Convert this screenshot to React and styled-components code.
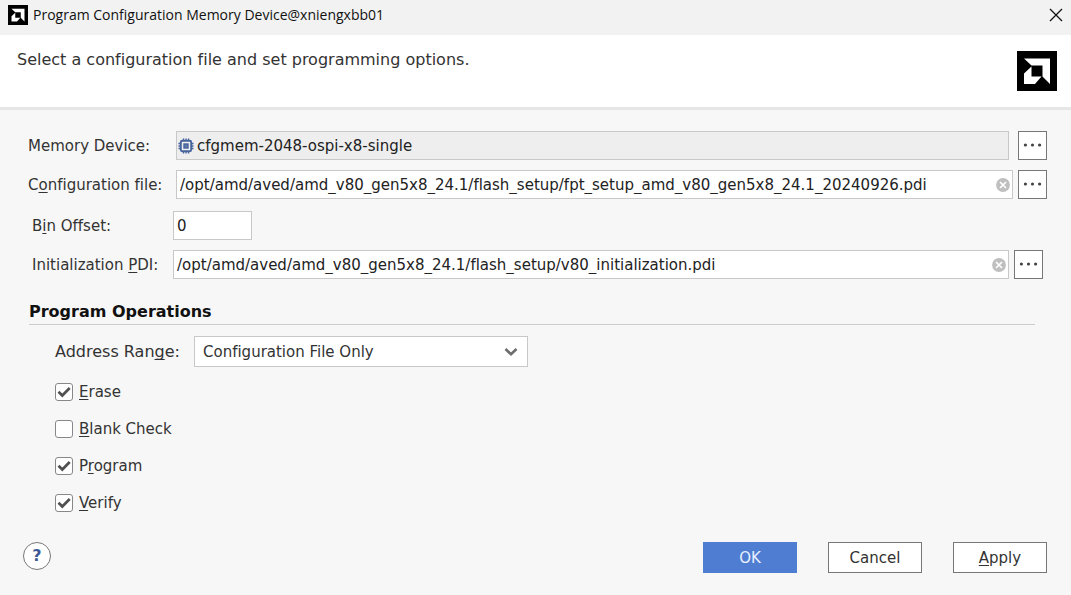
import React, { useState } from "react";
import styled, { createGlobalStyle } from "styled-components";

const GlobalStyle = createGlobalStyle`
  *, *::before, *::after { box-sizing: border-box; }
  html, body { margin: 0; background: #f7f7f7; }
  body, button, input, select {
    font-family: "DejaVu Sans", Verdana, sans-serif;
    font-size: 15px;
    font-variant-ligatures: none;
    color: #333;
  }
`;

const Dialog = styled.main`
  display: flex;
  flex-direction: column;
  min-height: 100vh;
  background: #f7f7f7;
`;

const TitleBar = styled.header`
  display: flex;
  align-items: center;
  gap: 5px;
  height: 35px;
  padding: 0 8px 5px;
  background: #f2f2f2;
`;

const WindowTitle = styled.h1`
  flex: 1;
  margin: 0;
  font: 400 14px/20px "Open Sans", "Segoe UI", sans-serif;
  color: #111;
`;

const CloseButton = styled.button`
  display: flex;
  padding: 0;
  border: 0;
  background: none;
`;

const Banner = styled.section`
  display: flex;
  justify-content: space-between;
  align-items: flex-start;
  height: 75px;
  padding: 16px 14px 0 17px;
  background: #fff;
  border-bottom: 3px solid #e6e6e6;
`;

const BannerText = styled.p`
  margin: 0;
  font-size: 16px;
  line-height: 18px;
`;

const Form = styled.form`
  display: flex;
  flex-direction: column;
  flex: 1;
`;

const FieldGroup = styled.div`
  display: flex;
  flex-direction: column;
  gap: 10px;
  padding: ${(p) => (p.$inset ? "12px 28px 0 32px" : "21px 24px 0 28px")};
`;

const FieldRow = styled.div`
  display: grid;
  grid-template-columns: ${(p) => (p.$inset ? 141 : 148)}px 1fr 29px;
  align-items: center;

  & > :nth-child(2) { margin-right: ${(p) => (p.$wideGap ? 9 : 5)}px; }
`;

const FieldLabel = styled.label`
  line-height: 18px;
  white-space: nowrap;
`;

const FieldBox = styled.div`
  display: flex;
  align-items: center;
  height: 29px;
  width: ${(p) => (p.$short ? "79px" : "auto")};
  padding: 0 2px 0 ${(p) => (p.$locked ? 1 : 3)}px;
  gap: 3px;
  border: 1px solid #c8c8c8;
  background: ${(p) => (p.$locked ? "#eee" : "#fff")};
`;

const TextInput = styled.input`
  flex: 1;
  min-width: 0;
  height: 100%;
  padding: 0;
  border: 0;
  outline: 0;
  background: transparent;
  color: #222;
`;

const ClearButton = styled.button`
  display: flex;
  padding: 0;
  border: 0;
  background: none;
`;

const BrowseButton = styled.button`
  display: grid;
  place-items: center;
  width: 29px;
  height: 29px;
  padding: 0;
  border: 1px solid #777;
  background: #fff;
`;

const Operations = styled.fieldset`
  min-width: 0;
  margin: 24px 36px 0 29px;
  padding: 0;
  border: 0;
`;

const OperationsTitle = styled.legend`
  width: 100%;
  padding: 0 0 3px;
  border-bottom: 1px solid #ccc;
  font-size: 16px;
  font-weight: 700;
  line-height: 18px;
  color: #111;
`;

const RangeRow = styled.div`
  display: flex;
  align-items: center;
  padding: 11px 0 5px 26px;

  & > label { width: 139px; font-size: 16px; }
`;

const SelectWrap = styled.div`
  display: grid;
  width: 334px;
  align-items: center;

  & > * { grid-area: 1 / 1; }
  & > svg { justify-self: end; margin-right: 10px; pointer-events: none; }
`;

const Select = styled.select`
  width: 100%;
  height: 31px;
  padding: 0 8px;
  border: 1px solid #c8c8c8;
  border-radius: 0;
  background: #fff;
  appearance: none;
`;

const CheckOptions = styled.div`
  display: grid;
  grid-auto-rows: 37px;
  padding: 1px 0 0 26px;
`;

const CheckRow = styled.label`
  display: flex;
  align-items: center;
  gap: 6px;
  width: fit-content;
`;

const CheckMark = styled.span`
  display: grid;

  & > * { grid-area: 1 / 1; }
  & > svg { pointer-events: none; }
`;

const CheckInput = styled.input`
  width: 18px;
  height: 18px;
  margin: 0;
  border: 1px solid #888;
  border-radius: 3px;
  background: #fff;
  appearance: none;
`;

const Footer = styled.footer`
  display: flex;
  align-items: flex-start;
  gap: 31px;
  margin-top: auto;
  padding: 0 24px 22px 23px;
`;

const HelpButton = styled.button`
  width: 28px;
  height: 28px;
  margin-right: auto;
  padding: 0;
  border: 1px solid #777;
  border-radius: 50%;
  background: #fff;
  color: #3d5a98;
  font-size: 16px;
  font-weight: 700;
  line-height: 20px;
`;

const ActionButton = styled.button`
  width: 94px;
  height: 31px;
  padding: 0;
  border: 1px solid ${(p) => (p.$primary ? "#4f7dd1" : "#777")};
  background: ${(p) => (p.$primary ? "#4f7dd1" : "#fff")};
  color: ${(p) => (p.$primary ? "#e8f0ff" : "#333")};
`;

const Mnemonic = styled.span`
  text-decoration: underline 1px;
  text-decoration-skip-ink: none;
  text-underline-offset: 2px;
`;

function Logo({ size }) {
  return (
    <svg width={size} height={size} viewBox="0 0 40 40" aria-hidden="true">
      <rect width="40" height="40" fill="#000" />
      <path d="M7 7.5H33V33L25.5 25.5V14.5H14.5Z" fill="#fff" />
      <path d="M14.5 15.5V25.5H24.5L18 33H7V22.5Z" fill="#fff" />
    </svg>
  );
}

function ChipIcon() {
  return (
    <svg width="16" height="16" viewBox="0 0 16 16" fill="none" stroke="#45639c" aria-hidden="true">
      <rect x="2.8" y="2.8" width="10.4" height="10.4" rx="1.5" strokeWidth="1.9" />
      <rect x="6" y="6" width="4" height="4" fill="#5f7bae" strokeWidth="1.4" />
      <path
        d="M5.5 0.5V3M8 0.5V3M10.5 0.5V3M5.5 13V15.5M8 13V15.5M10.5 13V15.5M0.5 5.5H3M0.5 8H3M0.5 10.5H3M13 5.5H15.5M13 8H15.5M13 10.5H15.5"
        strokeWidth="1.3"
      />
    </svg>
  );
}

function Browse({ label }) {
  return (
    <BrowseButton type="button" aria-label={label}>
      <svg width="19" height="5" viewBox="0 0 19 5" fill="#444" aria-hidden="true">
        <circle cx="2.4" cy="2" r="1.6" />
        <circle cx="9.5" cy="2" r="1.6" />
        <circle cx="16.6" cy="2" r="1.6" />
      </svg>
    </BrowseButton>
  );
}

function Clear({ onClick }) {
  return (
    <ClearButton type="button" aria-label="Clear" onClick={onClick}>
      <svg width="14" height="14" viewBox="0 0 14 14" aria-hidden="true">
        <circle cx="7" cy="7" r="6.9" fill="#bfbfbf" />
        <path d="M4 4L10 10M10 4L4 10" stroke="#fff" strokeWidth="1.7" />
      </svg>
    </ClearButton>
  );
}

function PathField({ id, initial }) {
  const [value, setValue] = useState(initial);
  return (
    <FieldBox>
      <TextInput id={id} value={value} onChange={(e) => setValue(e.target.value)} />
      <Clear onClick={() => setValue("")} />
    </FieldBox>
  );
}

function CheckOption({ checked: initial, children }) {
  const [checked, setChecked] = useState(Boolean(initial));
  return (
    <CheckRow>
      <CheckMark>
        <CheckInput type="checkbox" checked={checked} onChange={() => setChecked(!checked)} />
        {checked && (
          <svg width="18" height="18" viewBox="0 0 18 18" fill="none" aria-hidden="true">
            <path d="M3.5 8.7L7.3 12.5L14.7 5" stroke="#505050" strokeWidth="2.7" />
          </svg>
        )}
      </CheckMark>
      <span>{children}</span>
    </CheckRow>
  );
}

export default function App() {
  return (
    <>
      <GlobalStyle />
      <Dialog>
        <TitleBar>
          <Logo size={20} />
          <WindowTitle>Program Configuration Memory Device@xniengxbb01</WindowTitle>
          <CloseButton type="button" aria-label="Close">
            <svg width="14" height="14" viewBox="0 0 14 14" aria-hidden="true">
              <path d="M1 1L13 13M13 1L1 13" stroke="#111" strokeWidth="1.3" />
            </svg>
          </CloseButton>
        </TitleBar>

        <Banner>
          <BannerText>Select a configuration file and set programming options.</BannerText>
          <Logo size={40} />
        </Banner>

        <Form onSubmit={(e) => e.preventDefault()}>
          <FieldGroup>
            <FieldRow $wideGap>
              <FieldLabel htmlFor="device">Memory Device:</FieldLabel>
              <FieldBox $locked>
                <ChipIcon />
                <TextInput id="device" readOnly value="cfgmem-2048-ospi-x8-single" />
              </FieldBox>
              <Browse label="Choose memory device" />
            </FieldRow>
            <FieldRow>
              <FieldLabel htmlFor="config">
                C<Mnemonic>o</Mnemonic>nfiguration file:
              </FieldLabel>
              <PathField
                id="config"
                initial="/opt/amd/aved/amd_v80_gen5x8_24.1/flash_setup/fpt_setup_amd_v80_gen5x8_24.1_20240926.pdi"
              />
              <Browse label="Choose configuration file" />
            </FieldRow>
          </FieldGroup>

          <FieldGroup $inset>
            <FieldRow $inset>
              <FieldLabel htmlFor="offset">
                B<Mnemonic>i</Mnemonic>n Offset:
              </FieldLabel>
              <FieldBox $short>
                <TextInput id="offset" defaultValue="0" />
              </FieldBox>
            </FieldRow>
            <FieldRow $inset>
              <FieldLabel htmlFor="pdi">
                Initialization <Mnemonic>P</Mnemonic>DI:
              </FieldLabel>
              <PathField
                id="pdi"
                initial="/opt/amd/aved/amd_v80_gen5x8_24.1/flash_setup/v80_initialization.pdi"
              />
              <Browse label="Choose initialization PDI" />
            </FieldRow>
          </FieldGroup>

          <Operations>
            <OperationsTitle>Program Operations</OperationsTitle>
            <RangeRow>
              <FieldLabel htmlFor="range">
                Address Ran<Mnemonic>g</Mnemonic>e:
              </FieldLabel>
              <SelectWrap>
                <Select id="range" defaultValue="file">
                  <option value="file">Configuration File Only</option>
                  <option value="all">Entire Configuration Memory Device</option>
                </Select>
                <svg width="14" height="10" viewBox="0 0 14 10" fill="none" aria-hidden="true">
                  <path d="M1.5 2L7 7.3L12.5 2" stroke="#6e6e6e" strokeWidth="2.6" />
                </svg>
              </SelectWrap>
            </RangeRow>
            <CheckOptions>
              <CheckOption checked>
                <Mnemonic>E</Mnemonic>rase
              </CheckOption>
              <CheckOption>
                <Mnemonic>B</Mnemonic>lank Check
              </CheckOption>
              <CheckOption checked>
                P<Mnemonic>r</Mnemonic>ogram
              </CheckOption>
              <CheckOption checked>
                <Mnemonic>V</Mnemonic>erify
              </CheckOption>
            </CheckOptions>
          </Operations>

          <Footer>
            <HelpButton type="button" aria-label="Help">?</HelpButton>
            <ActionButton type="submit" $primary>OK</ActionButton>
            <ActionButton type="button">Cancel</ActionButton>
            <ActionButton type="button">
              <Mnemonic>A</Mnemonic>pply
            </ActionButton>
          </Footer>
        </Form>
      </Dialog>
    </>
  );
}
